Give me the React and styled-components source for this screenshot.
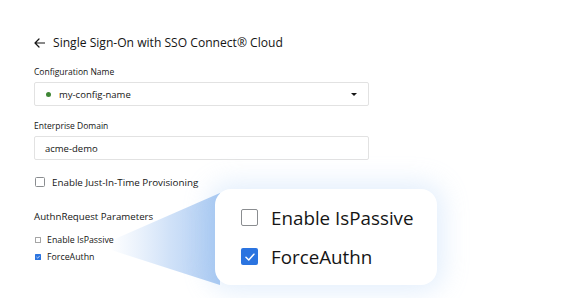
import React from 'react';
import styled, { createGlobalStyle } from 'styled-components';

const GlobalStyle = createGlobalStyle`
  html, body {
    margin: 0;
    padding: 0;
    background: #ffffff;
  }
  body {
    font-family: 'Open Sans', 'Liberation Sans', sans-serif;
    color: #151515;
  }
`;

// page + form column

const Page = styled.div`
  position: relative;
  width: 579px;
  height: 298px;
  overflow: hidden;
  background: #fff;
`;

const Form = styled.div`
  display: flex;
  flex-direction: column;
  width: 335px;
  padding: 35px 0 0 34px;
`;

const TitleRow = styled.div`
  display: flex;
  align-items: center;
  gap: 8px;
  height: 16px;
  margin-bottom: 15px;
`;

const Title = styled.h1`
  margin: 0;
  font-size: 12.1px;
  font-weight: 400;
  line-height: 16px;
  color: #151515;
`;

const Label = styled.div`
  font-size: 8.5px;
  line-height: 12px;
  color: #151515;
  margin-bottom: 4px;
  margin-top: ${(p) => p.top || 0}px;
`;

const Field = styled.div`
  box-sizing: border-box;
  display: flex;
  align-items: center;
  height: 24px;
  border: 1px solid #e2e2e2;
  border-radius: 2px;
  padding: 0 10px;
  font-size: 9.5px;
  color: #151515;
  gap: 8px;
`;

const Dot = styled.span`
  width: 5px;
  height: 5px;
  border-radius: 50%;
  background: #3e8635;
  margin-left: 1px;
`;

const Grow = styled.span`
  flex: 1;
`;

const Caret = styled.span`
  width: 0;
  height: 0;
  border-left: 3px solid transparent;
  border-right: 3px solid transparent;
  border-top: 3.5px solid #151515;
  margin-right: 1px;
`;

const CheckRow = styled.div`
  display: flex;
  align-items: center;
  gap: ${(p) => p.gap || 7}px;
  height: 12px;
  margin-top: ${(p) => p.top || 0}px;
  font-size: ${(p) => p.size || 9.5}px;
  color: #151515;
  padding-left: 1px;
`;

const Box = styled.span`
  box-sizing: border-box;
  display: inline-flex;
  align-items: center;
  justify-content: center;
  flex-shrink: 0;
  width: ${(p) => p.s}px;
  height: ${(p) => p.s}px;
  border: ${(p) => (p.checked ? 'none' : `${p.s > 10 ? 1.5 : 1}px solid ${p.light ? '#a5a5a5' : '#8a8d90'}`)};
  border-radius: ${(p) => (p.s > 10 ? 2 : p.s > 7 ? 1.5 : 0.5)}px;
  background: ${(p) => (p.checked ? '#2b74e0' : '#fff')};
`;

const SectionTitle = styled.div`
  font-size: 9.7px;
  line-height: 12px;
  margin-top: 23px;
  color: #151515;
`;

// callout overlay

const Wedge = styled.svg`
  position: absolute;
  left: 0;
  top: 0;
  pointer-events: none;
`;

const Callout = styled.div`
  position: absolute;
  left: 215px;
  top: 189px;
  box-sizing: border-box;
  width: 222px;
  height: 96px;
  border-radius: 16px;
  background: #fff;
  box-shadow: 0 0 26px 6px rgba(160, 198, 246, 0.3);
  display: flex;
  flex-direction: column;
  justify-content: center;
  gap: 17px;
  padding-left: 26px;
`;

const BigRow = styled.div`
  display: flex;
  align-items: center;
  gap: 13px;
  height: 22px;
  font-size: 18.8px;
  color: #151515;
`;

function Check({ size }) {
  return (
    <svg width={size * 0.7} height={size * 0.7} viewBox="0 0 12 12">
      <path d="M2 6.3 L4.8 9 L10 3.2" fill="none" stroke="#fff" strokeWidth={size > 10 ? 1.5 : 2} strokeLinecap="round" strokeLinejoin="round" />
    </svg>
  );
}

function ArrowLeft() {
  return (
    <svg width="11" height="10" viewBox="0 0 11 10">
      <path d="M10.5 5 H1 M5 1 L1 5 L5 9" fill="none" stroke="#151515" strokeWidth="1.2" strokeLinecap="round" strokeLinejoin="round" />
    </svg>
  );
}

export default function App() {
  return (
    <Page>
      <GlobalStyle />
      <Form>
        <TitleRow>
          <ArrowLeft />
          <Title>Single Sign-On with SSO Connect® Cloud</Title>
        </TitleRow>

        <Label>Configuration Name</Label>
        <Field>
          <Dot />
          <Grow>my-config-name</Grow>
          <Caret />
        </Field>

        <Label top={14}>Enterprise Domain</Label>
        <Field>acme-demo</Field>

        <CheckRow top={16} size={9.8}>
          <Box s={10} />
          Enable Just-In-Time Provisioning
        </CheckRow>

        <SectionTitle>AuthnRequest Parameters</SectionTitle>

        <CheckRow top={11} gap={6} size={8.8}>
          <Box s={6} light />
          Enable IsPassive
        </CheckRow>
        <CheckRow top={5} gap={6} size={8.8}>
          <Box s={6} checked>
            <Check size={6} />
          </Box>
          ForceAuthn
        </CheckRow>
      </Form>

      <Wedge width="579" height="298">
        <defs>
          <linearGradient id="wedgeFade" x1="108" y1="0" x2="220" y2="0" gradientUnits="userSpaceOnUse">
            <stop offset="0" stopColor="#c9ddf7" stopOpacity="0" />
            <stop offset="0.55" stopColor="#bcd5f5" stopOpacity="0.7" />
            <stop offset="1" stopColor="#a8c8f1" stopOpacity="1" />
          </linearGradient>
        </defs>
        <polygon points="108,242 220,193 220,285 108,249" fill="url(#wedgeFade)" />
      </Wedge>

      <Callout>
        <BigRow>
          <Box s={17} />
          Enable IsPassive
        </BigRow>
        <BigRow>
          <Box s={17} checked>
            <Check size={17} />
          </Box>
          ForceAuthn
        </BigRow>
      </Callout>
    </Page>
  );
}
